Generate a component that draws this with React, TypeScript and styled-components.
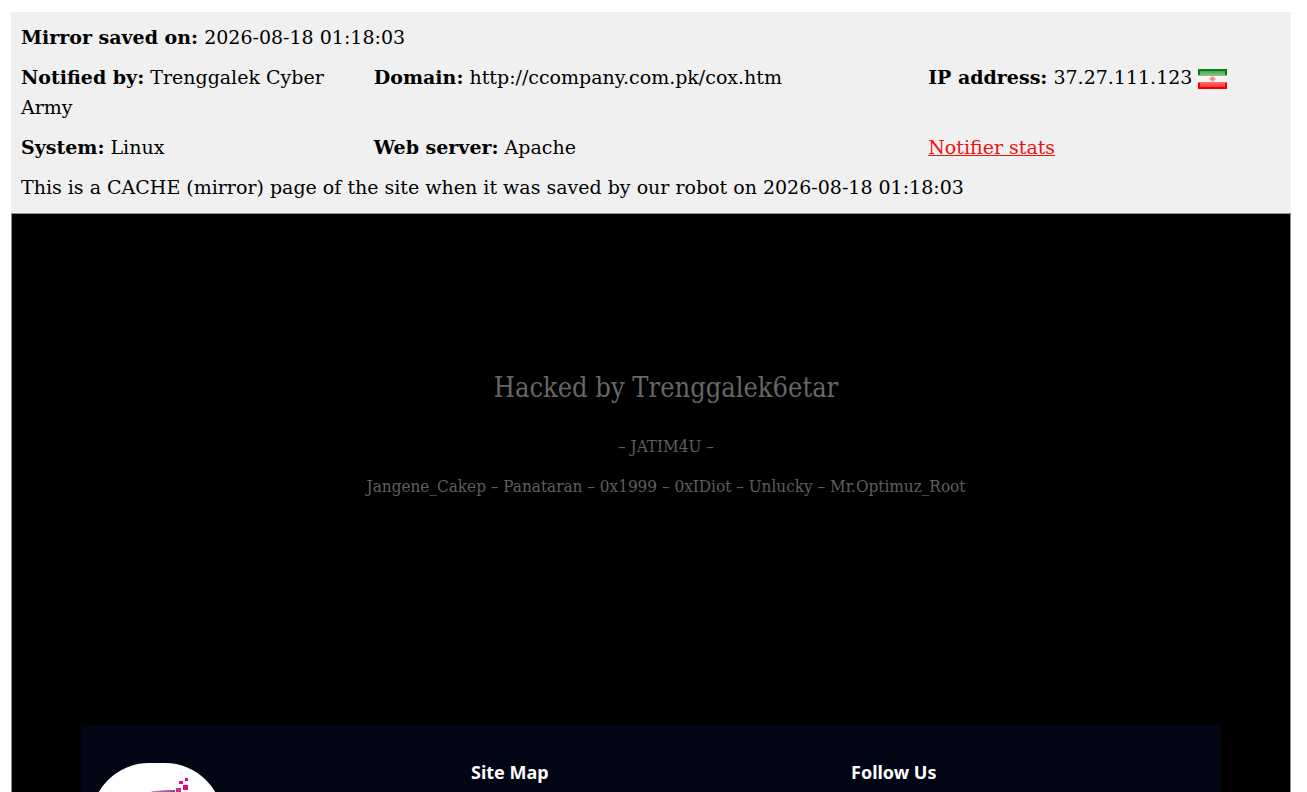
import React from "react";
import styled, { createGlobalStyle } from "styled-components";

const GlobalStyle = createGlobalStyle`
  * { box-sizing: border-box; }
  body { margin: 0; background: #fff; }
`;

const Page = styled.div`
  display: flex;
  flex-direction: column;
  height: 100vh;
  overflow: hidden;
  padding: 12px 16px 0 11px;
`;

const MirrorInfo = styled.header`
  display: grid;
  grid-template-columns: 28fr 44fr 28fr;
  row-gap: 10px;
  padding: 10px 10px 11px;
  background: #f0f0f0;
  color: #000;
  font: 19px/30px "DejaVu Serif", serif;
`;

const Field = styled.div<{ $wide?: boolean }>`
  grid-column: ${(p) => (p.$wide ? "1 / -1" : "auto")};
  padding-right: 10px;
`;

const StatsLink = styled.a`
  color: #f01010;
  text-decoration: underline;
`;

const Flag = styled.svg`
  display: inline-block;
  width: 29px;
  height: 20px;
  vertical-align: -5px;
`;

const Mirror = styled.main`
  flex: 1;
  min-height: 0;
  overflow: hidden;
  border: 1px solid #909090;
  border-bottom: 0;
  background: #000;
`;

const Message = styled.section`
  height: 511px;
  padding: 154px 0 0 30px;
  color: #666;
  font-family: "DejaVu Serif Condensed", "DejaVu Serif", serif;
  text-align: center;
`;

const Title = styled.h1`
  margin: 0 0 26px;
  font-size: 27px;
  font-weight: 400;
  line-height: 40px;
`;

const Line = styled.p`
  margin: 0 0 16px;
  color: #5e5e5e;
  font-size: 17px;
  line-height: 24px;
`;

const Footer = styled.footer`
  display: grid;
  grid-template-columns: repeat(3, 1fr);
  max-width: 1140px;
  min-height: 300px;
  margin: 0 auto;
  padding-top: 38px;
  background: #020614;
`;

const Column = styled.div`
  padding: 0 10px;
`;

const Heading = styled.h2`
  margin: 0;
  color: #fff;
  font: 700 18px/18px "Noto Sans", sans-serif;
`;

const Logo = styled.svg`
  display: block;
  width: 132px;
  height: 132px;
  border-radius: 58px;
  background: #fff;
`;

function IranFlag() {
  return (
    <Flag viewBox="0 0 29 20" role="img" aria-label="Iran">
      <defs>
        <linearGradient id="green" x2="0" y2="1">
          <stop offset="0" stopColor="#2c9438" />
          <stop offset="1" stopColor="#8cc896" />
        </linearGradient>
        <linearGradient id="red" x2="0" y2="1">
          <stop offset="0" stopColor="#ff7070" />
          <stop offset="1" stopColor="#f82020" />
        </linearGradient>
      </defs>
      <rect width="29" height="20" fill="#faf6f6" />
      <rect width="29" height="7" fill="url(#green)" />
      <rect y="13" width="29" height="7" fill="url(#red)" />
      <path d="M1 6V1H28V6" fill="none" stroke="#087f10" strokeWidth="2" />
      <path d="M1 14V19H28V14" fill="none" stroke="#f00000" strokeWidth="2" />
      <path d="M14.500 6.500L18.500 10L14.500 13.500L10.500 10Z" fill="#f9b4b4" />
      <path d="M14.500 8V12M12.500 10H16.500" stroke="#f07878" />
    </Flag>
  );
}

function CompanyLogo() {
  return (
    <Logo viewBox="0 0 132 132" role="img" aria-label="Company logo">
      <defs>
        <linearGradient id="sweep">
          <stop offset="0" stopColor="#d0b0d0" />
          <stop offset="1" stopColor="#94408f" />
        </linearGradient>
      </defs>
      <path d="M62 28Q74 27 84 27V31Q66 30 48 34Z" fill="url(#sweep)" />
      <path d="M85 25h5v5h-5z" fill="#c83090" />
      <path d="M92 22h5v5h-5zM88 18h4v3h-4zM94 15h3v3h-3z" fill="#e8087c" />
    </Logo>
  );
}

export default function App() {
  return (
    <>
      <GlobalStyle />
      <Page>
        <MirrorInfo>
          <Field $wide><strong>Mirror saved on:</strong> 2026-08-18 01:18:03</Field>
          <Field><strong>Notified by:</strong> Trenggalek Cyber Army</Field>
          <Field><strong>Domain:</strong> http://ccompany.com.pk/cox.htm</Field>
          <Field><strong>IP address:</strong> 37.27.111.123 <IranFlag /></Field>
          <Field><strong>System:</strong> Linux</Field>
          <Field><strong>Web server:</strong> Apache</Field>
          <Field><StatsLink href="#stats">Notifier stats</StatsLink></Field>
          <Field $wide>This is a CACHE (mirror) page of the site when it was saved by our robot on 2026-08-18 01:18:03</Field>
        </MirrorInfo>
        <Mirror>
          <Message>
            <Title>Hacked by Trenggalek6etar</Title>
            <Line>– JATIM4U –</Line>
            <Line>Jangene_Cakep – Panataran – 0x1999 – 0xIDiot – Unlucky – Mr.Optimuz_Root</Line>
          </Message>
          <Footer>
            <Column><CompanyLogo /></Column>
            <Column><Heading>Site Map</Heading></Column>
            <Column><Heading>Follow Us</Heading></Column>
          </Footer>
        </Mirror>
      </Page>
    </>
  );
}
